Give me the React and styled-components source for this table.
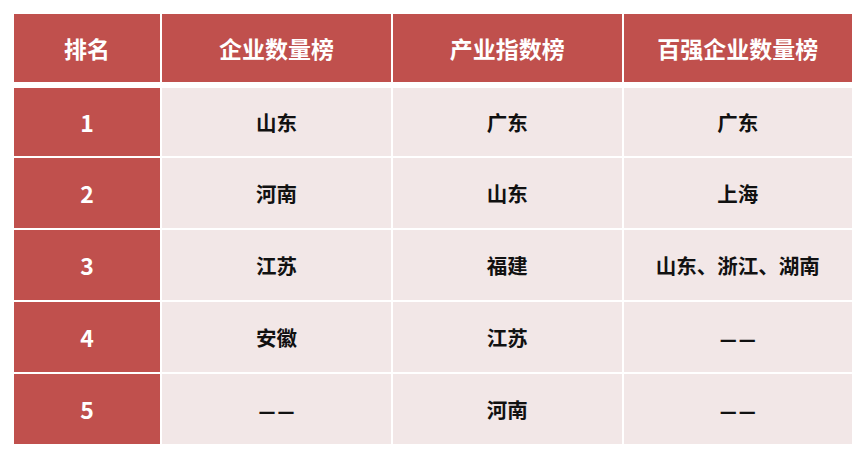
import React from 'react';
import styled, { createGlobalStyle } from 'styled-components';

const GlobalStyle = createGlobalStyle`
  html, body {
    margin: 0;
    padding: 0;
    background: #ffffff;
  }
  body {
    font-family: "Noto Sans CJK SC", "Noto Sans", sans-serif;
  }
`;

const Page = styled.div`
  width: 867px;
  height: 459px;
  padding: 14px 0 0 14px;
  box-sizing: border-box;
  background: #ffffff;
`;

const Table = styled.div`
  width: 838px;
  display: grid;
  grid-template-columns: 146px 229px 1fr 1fr;
  grid-template-rows: 72px 68px 70px 70px 70px 70px;
  column-gap: 2px;
  row-gap: 2px;
`;

const Cell = styled.div`
  display: flex;
  align-items: center;
  justify-content: center;
  font-weight: 700;
  background: ${({ $head }) => ($head ? '#c0504d' : '#f2e7e7')};
  color: ${({ $head }) => ($head ? '#ffffff' : '#111111')};
  font-size: ${({ $big }) => ($big ? '23px' : '20.5px')};
`;

const HeadCell = styled(Cell)`
  height: 68px;
  align-self: start;
`;

const Dash = styled.span`
  font-family: "DejaVu Sans", sans-serif;
  font-size: 17px;
  letter-spacing: 2px;
  margin-right: -2px;
  position: relative;
  top: 3px;
`;

const headers = ['排名', '企业数量榜', '产业指数榜', '百强企业数量榜'];

const rows = [
  ['1', '山东', '广东', '广东'],
  ['2', '河南', '山东', '上海'],
  ['3', '江苏', '福建', '山东、浙江、湖南'],
  ['4', '安徽', '江苏', '——'],
  ['5', '——', '河南', '——'],
];

const App = () => (
  <Page>
    <GlobalStyle />
    <Table>
      {headers.map((h) => (
        <HeadCell key={h} $head $big>
          {h}
        </HeadCell>
      ))}
      {rows.map((row) =>
        row.map((v, i) => (
          <Cell key={row[0] + '-' + i} $head={i === 0} $big={i === 0}>
            {v === '——' ? <Dash>{v}</Dash> : v}
          </Cell>
        ))
      )}
    </Table>
  </Page>
);

export default App;
